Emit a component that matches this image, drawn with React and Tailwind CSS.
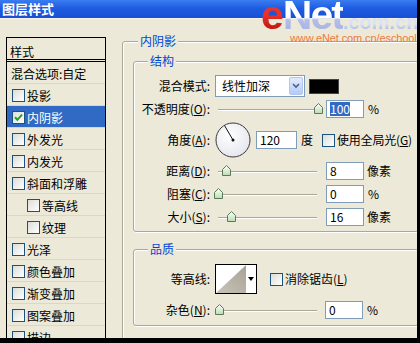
import React from "react";

function Cb({ checked }) {
  return (
    <span className="inline-flex w-[13px] h-[13px] shrink-0 items-center justify-center border border-[#1c5180] bg-gradient-to-br from-[#dcdcd7] to-white">
      {checked && (
        <svg width="9" height="9" viewBox="0 0 9 9">
          <path d="M1 4.2 L3.4 6.8 L8 1.6" stroke="#21a121" strokeWidth="2" fill="none" />
        </svg>
      )}
    </span>
  );
}

function Slider({ pos }) {
  return (
    <div className="relative w-[107px] h-[12px] shrink-0">
      <div className="absolute left-[3px] top-[6px] w-[99px] h-[1px] bg-[#a9a69a] shadow-[0_1px_0_#ffffff]" />
      <svg
        className="absolute top-0"
        style={{ left: pos - 4.5 }}
        width="9"
        height="11"
        viewBox="0 0 9 11"
      >
        <defs>
          <linearGradient id="tg" x1="0" y1="0" x2="0" y2="1">
            <stop offset="0" stopColor="#ffffff" />
            <stop offset="1" stopColor="#b9dcb2" />
          </linearGradient>
        </defs>
        <path d="M0.5 4.5 L4.5 0.5 L8.5 4.5 L8.5 10.5 L0.5 10.5 Z" fill="url(#tg)" stroke="#5b7a5a" strokeWidth="1" />
      </svg>
    </div>
  );
}

function Input({ children, w = "w-[38px]" }) {
  return (
    <div className={`${w} h-[18px] shrink-0 border border-[#7f9db9] bg-white flex items-center pl-[3px] leading-[14px]`}>
      {children}
    </div>
  );
}

function Label({ children }) {
  return <div className="w-[76px] shrink-0 text-right pr-0">{children}</div>;
}

const listItems = [
  { t: "混合选项:自定", noCb: true },
  { t: "投影" },
  { t: "内阴影", checked: true, sel: true },
  { t: "外发光" },
  { t: "内发光" },
  { t: "斜面和浮雕" },
  { t: "等高线", indent: true },
  { t: "纹理", indent: true },
  { t: "光泽" },
  { t: "颜色叠加" },
  { t: "渐变叠加" },
  { t: "图案叠加" },
  { t: "描边" },
];

export default function App() {
  return (
    <div className="w-[420px] h-[343px] bg-black overflow-hidden font-['Noto_Sans_CJK_SC','Noto_Sans',sans-serif] text-[12px] leading-[16px] text-black">
      <div className="relative w-[417px] h-[338px] bg-[#ece9d8] overflow-hidden flex flex-col">
        {/* title bar */}
        <div className="h-[19px] shrink-0 bg-gradient-to-b from-[#3a7cf0] via-[#1d5ae0] to-[#1a50d2] border-b border-[#f4f2ea] flex items-center pl-[2px]">
          <span className="text-white font-bold text-[13px] leading-[18px]">图层样式</span>
        </div>

        <div className="flex">
          {/* left list */}
          <div className="ml-[6px] mt-[18px] w-[100px] shrink-0 border border-black">
            <div className="h-[24px] pl-[3px] pt-[6px] flex items-center border-b-[3px] border-double border-black">
              样式
            </div>
            {listItems.map((it, i) => (
              <div
                key={i}
                className={`h-[22px] flex items-center gap-[1px] border-b border-[#dbd7c7] ${
                  it.sel ? "bg-[#316ac5] text-white" : ""
                } ${it.noCb ? "pl-[3px] pt-[2px]" : it.indent ? "pl-[20px] pt-[2px]" : "pl-[5px] pt-[2px]"}`}
              >
                {!it.noCb && <Cb checked={it.checked} />}
                <span className="pl-[1px]">{it.t}</span>
              </div>
            ))}
          </div>

          {/* right panel */}
          <fieldset className="ml-[16px] mt-[14px] w-[308px] shrink-0 border border-[#aca899] rounded-[3px] px-[10px] pb-[6px] shadow-[1px_1px_0_#ffffff,inset_1px_1px_0_#ffffff]">
            <legend className="ml-[5px] px-[2px] text-[#0046d5] leading-[16px] bg-[#ece9d8]">内阴影</legend>

            <fieldset className="mt-[4px] border border-[#aca899] rounded-[3px] px-0 pb-[5px] shadow-[1px_1px_0_#ffffff,inset_1px_1px_0_#ffffff]">
              <legend className="ml-[14px] px-[2px] text-[#0046d5] leading-[16px] bg-[#ece9d8]">结构</legend>

              {/* blend mode */}
              <div className="mt-[6px] h-[22px] flex items-center">
                <Label>混合模式:</Label>
                <div className="ml-[5px] w-[90px] h-[22px] border border-[#7f9db9] bg-white flex items-center">
                  <span className="pl-[6px] flex-1">线性加深</span>
                  <span className="w-[14px] h-[18px] mr-[1px] rounded-[2px] border border-[#b3c6f3] bg-gradient-to-b from-[#e3ebfe] to-[#b6caf7] flex items-center justify-center">
                    <svg width="8" height="6" viewBox="0 0 8 6">
                      <path d="M1 1 L4 4 L7 1" stroke="#4d6185" strokeWidth="1.6" fill="none" />
                    </svg>
                  </span>
                </div>
                <div className="ml-[4px] w-[30px] h-[15px] bg-black border border-[#444]" />
              </div>

              {/* opacity */}
              <div className="mt-[3px] h-[18px] flex items-center">
                <Label>
                  不透明度(<span className="underline">O</span>):
                </Label>
                <div className="ml-[5px]">
                  <Slider pos={103} />
                </div>
                <div className="ml-[4px]">
                  <Input>
                    <span className="bg-[#316ac5] text-white">100</span>
                  </Input>
                </div>
                <span className="ml-[4px]">%</span>
              </div>

              {/* angle */}
              <div className="mt-[4px] h-[36px] flex items-center">
                <Label>
                  角度(<span className="underline">A</span>):
                </Label>
                <svg className="ml-[5px] shrink-0" width="36" height="36" viewBox="0 0 36 36">
                  <defs>
                    <radialGradient id="dg" cx="0.4" cy="0.35" r="0.7">
                      <stop offset="0" stopColor="#ffffff" />
                      <stop offset="1" stopColor="#e4e6ee" />
                    </radialGradient>
                  </defs>
                  <circle cx="18" cy="18" r="17" fill="url(#dg)" stroke="#3a3a3a" strokeWidth="1" />
                  <line x1="18" y1="18" x2="9.5" y2="3.5" stroke="#111" strokeWidth="1" />
                  <circle cx="18" cy="18" r="1.5" fill="#111" />
                </svg>
                <div className="ml-[5px]">
                  <Input w="w-[41px]">120</Input>
                </div>
                <span className="ml-[4px]">度</span>
                <span className="ml-[9px] flex items-center">
                  <Cb />
                </span>
                <span className="ml-[2px] tracking-[-0.2px]">
                  使用全局光(<span className="underline">G</span>)
                </span>
              </div>

              {/* distance */}
              <div className="mt-[4px] h-[18px] flex items-center">
                <Label>
                  距离(<span className="underline">D</span>):
                </Label>
                <div className="ml-[5px]">
                  <Slider pos={11} />
                </div>
                <div className="ml-[4px]">
                  <Input>8</Input>
                </div>
                <span className="ml-[3px]">像素</span>
              </div>

              {/* choke */}
              <div className="mt-[5px] h-[18px] flex items-center">
                <Label>
                  阻塞(<span className="underline">C</span>):
                </Label>
                <div className="ml-[5px]">
                  <Slider pos={3} />
                </div>
                <div className="ml-[4px]">
                  <Input>0</Input>
                </div>
                <span className="ml-[4px]">%</span>
              </div>

              {/* size */}
              <div className="mt-[5px] h-[18px] flex items-center">
                <Label>
                  大小(<span className="underline">S</span>):
                </Label>
                <div className="ml-[5px]">
                  <Slider pos={16} />
                </div>
                <div className="ml-[4px]">
                  <Input>16</Input>
                </div>
                <span className="ml-[3px]">像素</span>
              </div>
            </fieldset>

            <fieldset className="mt-[9px] border border-[#aca899] rounded-[3px] px-0 pb-[6px] shadow-[1px_1px_0_#ffffff,inset_1px_1px_0_#ffffff]">
              <legend className="ml-[14px] px-[2px] text-[#0046d5] leading-[16px] bg-[#ece9d8]">品质</legend>

              <div className="mt-[7px] h-[30px] flex items-center">
                <Label>等高线:</Label>
                <div className="ml-[5px] w-[42px] h-[30px] border border-black bg-white flex shrink-0">
                  <svg width="30" height="28" viewBox="0 0 30 28">
                    <defs>
                      <linearGradient id="cg" x1="0" y1="1" x2="1" y2="0">
                        <stop offset="0" stopColor="#c9c4b8" />
                        <stop offset="1" stopColor="#a8a296" />
                      </linearGradient>
                    </defs>
                    <polygon points="0,28 30,0 30,28" fill="url(#cg)" />
                  </svg>
                  <div className="flex-1 flex justify-center pt-[12px]">
                    <svg width="6" height="4" viewBox="0 0 6 4">
                      <polygon points="0,0 6,0 3,4" fill="#000" />
                    </svg>
                  </div>
                </div>
                <span className="ml-[13px] flex items-center">
                  <Cb />
                </span>
                <span className="ml-[2px]">
                  消除锯齿(<span className="underline">L</span>)
                </span>
              </div>

              <div className="mt-[7px] h-[18px] flex items-center">
                <Label>
                  杂色(<span className="underline">N</span>):
                </Label>
                <div className="ml-[5px]">
                  <Slider pos={4} />
                </div>
                <div className="ml-[3px]">
                  <Input>0</Input>
                </div>
                <span className="ml-[4px]">%</span>
              </div>
            </fieldset>
          </fieldset>
        </div>

        {/* watermark logo */}
        <div className="absolute left-[261px] top-[-5px] flex items-baseline font-['Liberation_Sans',Arial,sans-serif] font-bold leading-[40px]">
          <span className="text-[length:41px] tracking-[-1px] bg-[linear-gradient(to_bottom,#e8322a_50%,#c41c14_80%)] bg-clip-text text-transparent">e</span>
          <span className="text-[length:41px] tracking-[-2px] bg-[linear-gradient(to_bottom,#ffffff_56%,#b4bdea_62%,#a9b3e4_90%)] bg-clip-text text-transparent">Net</span>
          <span className="text-[length:20px] bg-[linear-gradient(to_bottom,#d8e2fa_55%,#8fa6e0_75%)] bg-clip-text text-transparent">.com.cn</span>
        </div>
        <div className="absolute left-[290px] top-[32px] font-['Liberation_Sans',Arial,sans-serif] text-[length:11px] leading-[13px] tracking-[-0.1px] text-[#ec7a3c]">
          www.eNet.com.cn/eschool
        </div>
      </div>
    </div>
  );
}
